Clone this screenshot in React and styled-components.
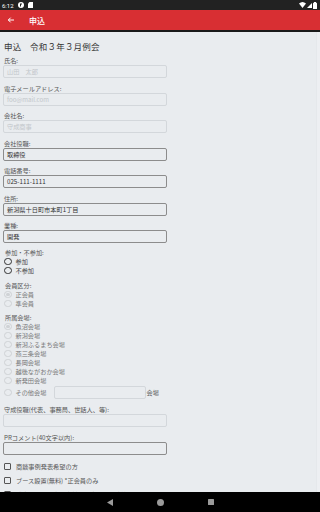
import React from 'react';
import styled, { createGlobalStyle } from 'styled-components';

const GlobalStyle = createGlobalStyle`
  html, body {
    margin: 0;
    padding: 0;
    background: #000;
  }
  * {
    box-sizing: border-box;
  }
`;

const Screen = styled.div`
  width: 320px;
  height: 512px;
  display: flex;
  flex-direction: column;
  overflow: hidden;
  font-family: "Noto Sans CJK JP", "Noto Sans", sans-serif;
  background: #e9ecef;
`;

const StatusBar = styled.div`
  height: 10px;
  background: #222;
  color: #fff;
  display: flex;
  align-items: center;
  justify-content: space-between;
  padding: 0 3px 0 2px;
  font-family: Roboto, sans-serif;
  font-size: 6px;
`;

const StatusLeft = styled.div`
  display: flex;
  align-items: center;
  gap: 4px;
`;

const StatusRight = styled.div`
  display: flex;
  align-items: center;
  gap: 1px;
`;

const AppBar = styled.header`
  height: 22px;
  background: #d82f33;
  border-bottom: 2px solid #1a1a1a;
  display: flex;
  align-items: center;
  padding-left: 7px;
  color: #fff;
  font-size: 8px;
  font-weight: 500;
`;

const BackButton = styled.span`
  display: flex;
  align-items: center;
  width: 22px;
`;

const Body = styled.div`
  flex: 1;
  display: flex;
  overflow: hidden;
`;

const Content = styled.main`
  flex: 1;
  padding: 8px 0 0 4px;
  color: #444;
`;

const ScrollTrack = styled.div`
  width: 4px;
  background: #edeff2;
  border-left: 1px solid #e5e8eb;
`;

const PageTitle = styled.h1`
  margin: 0 0 4px;
  font-size: 8.5px;
  font-weight: 400;
  line-height: 12px;
  color: #333;
  letter-spacing: 0.2px;
`;

const Field = styled.div`
  width: 164px;
  margin-left: -1px;
  margin-bottom: ${(p) => p.$gap || 5.5}px;
`;

const Label = styled.div`
  font-size: 6.2px;
  line-height: 9px;
  color: #555;
  padding-left: 1px;
`;

const Input = styled.div`
  height: 13px;
  border: 1px solid ${(p) => (p.$active ? '#8c8c8c' : '#d3d7db')};
  border-radius: 2px;
  background: #e9ecef;
  font-size: 6.2px;
  line-height: 11px;
  padding-left: 3px;
  color: ${(p) => (p.$placeholder ? '#c2c6ca' : '#333')};
  width: ${(p) => (p.$w ? `${p.$w}px` : 'auto')};
`;

const RadioRow = styled.div`
  display: flex;
  align-items: center;
  height: 9px;
  font-size: 6.2px;
  color: ${(p) => (p.$disabled ? '#777' : '#444')};
`;

const Radio = styled.span`
  width: 7.5px;
  height: 7.5px;
  border-radius: 50%;
  border: 1px solid ${(p) => (p.$disabled ? '#cfd2d5' : '#333')};
  margin-right: 4px;
  display: flex;
  align-items: center;
  justify-content: center;
  &::after {
    content: '';
    width: 3.5px;
    height: 3.5px;
    border-radius: 50%;
    background: ${(p) => (p.$checked ? '#cfd2d5' : 'transparent')};
  }
`;

const OtherRow = styled.div`
  display: flex;
  align-items: center;
  height: 15px;
  font-size: 6.2px;
  color: #777;
`;

const OtherText = styled.span`
  width: 38px;
`;

const Suffix = styled.span`
  margin-left: 1px;
  color: #555;
`;

const RadioGroup = styled.div`
  margin-bottom: ${(p) => p.$gap || 6}px;
`;

const CheckRow = styled.div`
  display: flex;
  align-items: center;
  height: 14px;
  font-size: 6.2px;
  color: #555;
`;

const Checkbox = styled.span`
  width: 7px;
  height: 7px;
  border: 1px solid #555;
  border-radius: 1px;
  margin-right: 5px;
`;

const NavBar = styled.nav`
  height: 20px;
  background: #000;
  display: flex;
  align-items: center;
  justify-content: center;
  gap: 44px;
`;

const StatusIcons = () => (
  <StatusRight>
    <svg width="7" height="6" viewBox="0 0 14 12">
      <path d="M0 3 Q7 -3 14 3 L7 12 Z" fill="#fff" />
    </svg>
    <svg width="5" height="5" viewBox="0 0 10 10">
      <path d="M0 10 L10 0 L10 10 Z" fill="#fff" />
    </svg>
    <svg width="4" height="7" viewBox="0 0 8 14">
      <rect x="2" y="0" width="4" height="2" fill="#fff" />
      <rect x="0" y="1.5" width="8" height="12.5" rx="1" fill="#fff" />
    </svg>
  </StatusRight>
);

const venues = [
  ['魚沼会場', true],
  ['新潟会場'],
  ['新潟ふるまち会場'],
  ['燕三条会場'],
  ['長岡会場'],
  ['越後ながおか会場'],
  ['新発田会場'],
];

export default function App() {
  return (
    <>
      <GlobalStyle />
      <Screen>
        <StatusBar>
          <StatusLeft>
            <span>6:12</span>
            <svg width="6" height="6" viewBox="0 0 12 12">
              <circle cx="6" cy="6" r="6" fill="#fff" />
              <path d="M4 3 H8 V5 H6 V9 H4 Z" fill="#222" />
            </svg>
            <svg width="5" height="6" viewBox="0 0 10 12">
              <path d="M3 0 H10 V12 H0 V3 Z" fill="#fff" />
            </svg>
          </StatusLeft>
          <StatusIcons />
        </StatusBar>
        <AppBar>
          <BackButton>
            <svg width="8" height="8" viewBox="0 0 24 24" fill="none" stroke="#fff" strokeWidth="3">
              <path d="M21 12 H4 M11 5 L4 12 L11 19" />
            </svg>
          </BackButton>
          申込
        </AppBar>
        <Body>
          <Content>
            <PageTitle>申込　令和３年３月例会</PageTitle>

            <Field>
              <Label>氏名:</Label>
              <Input $placeholder>山田　太郎</Input>
            </Field>
            <Field>
              <Label>電子メールアドレス:</Label>
              <Input $placeholder>foo@mail.com</Input>
            </Field>
            <Field>
              <Label>会社名:</Label>
              <Input $placeholder>守成商事</Input>
            </Field>
            <Field>
              <Label>会社役職:</Label>
              <Input $active>取締役</Input>
            </Field>
            <Field>
              <Label>電話番号:</Label>
              <Input $active>025-111-1111</Input>
            </Field>
            <Field>
              <Label>住所:</Label>
              <Input $active>新潟県十日町市本町1丁目</Input>
            </Field>
            <Field $gap={5}>
              <Label>業種:</Label>
              <Input $active>開発</Input>
            </Field>

            <RadioGroup $gap={6}>
              <Label>参加・不参加:</Label>
              <RadioRow>
                <Radio />参加
              </RadioRow>
              <RadioRow>
                <Radio />不参加
              </RadioRow>
            </RadioGroup>

            <RadioGroup $gap={5}>
              <Label>会員区分:</Label>
              <RadioRow $disabled>
                <Radio $disabled $checked />正会員
              </RadioRow>
              <RadioRow $disabled>
                <Radio $disabled />準会員
              </RadioRow>
            </RadioGroup>

            <RadioGroup $gap={5}>
              <Label>所属会場:</Label>
              {venues.map(([name, checked]) => (
                <RadioRow $disabled key={name}>
                  <Radio $disabled $checked={checked} />
                  {name}
                </RadioRow>
              ))}
              <OtherRow>
                <Radio $disabled />
                <OtherText>その他会場</OtherText>
                <Input $w={92} />
                <Suffix>会場</Suffix>
              </OtherRow>
            </RadioGroup>

            <Field $gap={6}>
              <Label>守成役職(代表、事務局、世話人、等):</Label>
              <Input />
            </Field>
            <Field $gap={4}>
              <Label>PRコメント(40文字以内):</Label>
              <Input $active />
            </Field>

            <CheckRow>
              <Checkbox />商談事例発表希望の方
            </CheckRow>
            <CheckRow>
              <Checkbox />ブース設置(無料) *正会員のみ
            </CheckRow>
            <CheckRow>
              <Checkbox />発表をされる方は事前に担当者より連絡をいたします
            </CheckRow>
          </Content>
          <ScrollTrack />
        </Body>
        <NavBar>
          <svg width="6" height="7" viewBox="0 0 12 14">
            <path d="M12 0 V14 L0 7 Z" fill="#9a9a9a" />
          </svg>
          <svg width="7" height="7" viewBox="0 0 14 14">
            <circle cx="7" cy="7" r="7" fill="#9a9a9a" />
          </svg>
          <svg width="6" height="6" viewBox="0 0 12 12">
            <rect width="12" height="12" rx="1" fill="#9a9a9a" />
          </svg>
        </NavBar>
      </Screen>
    </>
  );
}
